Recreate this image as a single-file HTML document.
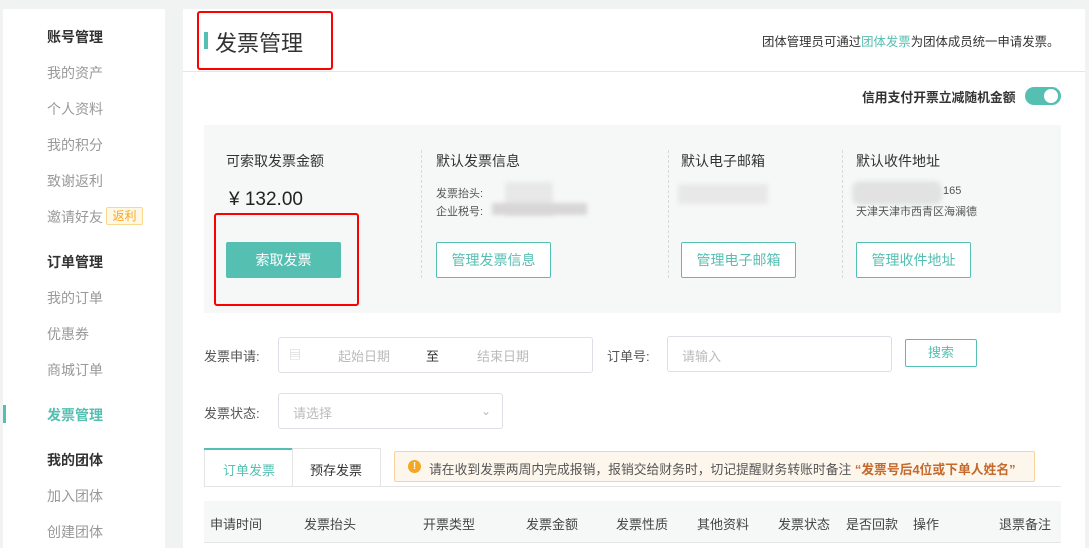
<!DOCTYPE html>
<html><head><meta charset="utf-8"><style>
*{margin:0;padding:0;box-sizing:border-box}
body{width:1089px;height:548px;background:#f1f3f3;font-family:"Liberation Sans","Noto Sans CJK SC",sans-serif;position:relative;overflow:hidden;color:#333}
.a{position:absolute;white-space:nowrap}
.side{position:absolute;left:3px;top:9px;width:162px;height:539px;background:#fff}
.main{position:absolute;left:183px;top:9px;width:902px;height:539px;background:#fff}
.s{font-size:14px;color:#999;left:47px}
.h{font-size:14px;color:#333;font-weight:bold;left:47px}
.btn{position:absolute;border:1px solid #55bfb2;color:#55bfb2;font-size:14px;text-align:center;border-radius:2px;background:#fff}
.inp{position:absolute;border:1px solid #dcdfe6;border-radius:3px;background:#fff;font-size:13px;color:#bbb}
.blur{position:absolute;background:#e2e2e2;filter:blur(2px)}
</style></head><body>
<div class="side"></div>
<div class="a h" style="top:27px">账号管理</div>
<div class="a s" style="top:63px">我的资产</div>
<div class="a s" style="top:99px">个人资料</div>
<div class="a s" style="top:135px">我的积分</div>
<div class="a s" style="top:171px">致谢返利</div>
<div class="a s" style="top:207px">邀请好友</div>
<div class="a" style="left:106px;top:207px;width:37px;height:18px;border:1px solid #fbd98a;background:#fff8e6;color:#f5a623;font-size:12px;text-align:center;line-height:16px;border-radius:2px">返利</div>
<div class="a h" style="top:252px">订单管理</div>
<div class="a s" style="top:288px">我的订单</div>
<div class="a s" style="top:324px">优惠券</div>
<div class="a s" style="top:360px">商城订单</div>
<div class="a" style="left:3px;top:405px;width:3px;height:18px;background:#55bfb2"></div>
<div class="a h" style="top:405px;color:#55bfb2">发票管理</div>
<div class="a h" style="top:450px">我的团体</div>
<div class="a s" style="top:486px">加入团体</div>
<div class="a s" style="top:522px">创建团体</div>

<div class="main"></div>
<div class="a" style="left:183px;top:71px;width:902px;height:1px;background:#e6e6e6"></div>
<div class="a" style="left:204px;top:32px;width:4px;height:17px;background:#55bfb2"></div>
<div class="a" style="left:215px;top:26px;font-size:22px;color:#333">发票管理</div>
<div class="a" style="left:197px;top:11px;width:136px;height:59px;border:2px solid #f00;border-radius:3px"></div>
<div class="a" style="left:762px;top:32px;font-size:12.4px;color:#333">团体管理员可通过<span style="color:#55bfb2">团体发票</span>为团体成员统一申请发票。</div>
<div class="a" style="left:862px;top:87px;font-size:12.8px;font-weight:bold;color:#333">信用支付开票立减随机金额</div>
<div class="a" style="left:1025px;top:87px;width:36px;height:18px;border-radius:9px;background:#55bfb2"><div style="position:absolute;right:3px;top:2px;width:14px;height:14px;border-radius:50%;background:#fff"></div></div>

<div class="a" style="left:204px;top:125px;width:857px;height:188px;background:#f6f8f8"></div>
<div class="a" style="left:226px;top:151px;font-size:14px">可索取发票金额</div>
<div class="a" style="left:229px;top:189px;font-size:19px;color:#222">¥ 132.00</div>
<div class="a" style="left:226px;top:242px;width:115px;height:36px;background:#55bfb2;color:#fff;font-size:14px;text-align:center;line-height:36px;border-radius:2px">索取发票</div>
<div class="a" style="left:214px;top:213px;width:145px;height:93px;border:2px solid #f00;border-radius:3px"></div>
<div class="a" style="left:421px;top:150px;height:128px;border-left:1px dashed #d8d8d8"></div>
<div class="a" style="left:668px;top:150px;height:128px;border-left:1px dashed #d8d8d8"></div>
<div class="a" style="left:842px;top:150px;height:128px;border-left:1px dashed #d8d8d8"></div>
<div class="a" style="left:436px;top:151px;font-size:14px">默认发票信息</div>
<div class="blur" style="left:505px;top:182px;width:48px;height:34px;background:#e8e8e8"></div>
<div class="blur" style="left:492px;top:203px;width:95px;height:12px;background:#d8d6d6"></div>
<div class="a" style="left:436px;top:185px;font-size:11px;color:#555">发票抬头:</div>
<div class="a" style="left:436px;top:203px;font-size:11px;color:#555">企业税号:</div>
<div class="a" style="left:681px;top:151px;font-size:14px">默认电子邮箱</div>
<div class="blur" style="left:678px;top:184px;width:90px;height:20px;background:#e8e8e8"></div>
<div class="a" style="left:856px;top:151px;font-size:14px">默认收件地址</div>
<div class="blur" style="left:852px;top:181px;width:90px;height:24px;background:#e2e2e2;border-radius:8px"></div>
<div class="a" style="left:943px;top:185px;font-size:11px;color:#555">165</div>
<div class="a" style="left:856px;top:203px;font-size:11px;color:#555">天津天津市西青区海澜德</div>
<div class="btn" style="left:436px;top:242px;width:115px;height:36px;line-height:34px">管理发票信息</div>
<div class="btn" style="left:681px;top:242px;width:115px;height:36px;line-height:34px">管理电子邮箱</div>
<div class="btn" style="left:856px;top:242px;width:115px;height:36px;line-height:34px">管理收件地址</div>

<div class="a" style="left:204px;top:346px;font-size:13px;color:#555">发票申请:</div>
<div class="inp" style="left:278px;top:337px;width:315px;height:36px"></div>
<div class="a" style="left:289px;top:346px;font-size:12px;color:#ccc">▤</div>
<div class="a" style="left:338px;top:346px;font-size:13px;color:#bbb">起始日期</div>
<div class="a" style="left:426px;top:346px;font-size:13px;color:#333">至</div>
<div class="a" style="left:477px;top:346px;font-size:13px;color:#bbb">结束日期</div>
<div class="a" style="left:607px;top:346px;font-size:13px;color:#555">订单号:</div>
<div class="inp" style="left:667px;top:336px;width:225px;height:36px"></div>
<div class="a" style="left:682px;top:346px;font-size:13px;color:#bbb">请输入</div>
<div class="btn" style="left:905px;top:339px;width:72px;height:28px;line-height:26px;font-size:13px">搜索</div>
<div class="a" style="left:204px;top:403px;font-size:13px;color:#555">发票状态:</div>
<div class="inp" style="left:278px;top:393px;width:225px;height:36px"></div>
<div class="a" style="left:293px;top:403px;font-size:13px;color:#bbb">请选择</div>
<div class="a" style="left:481px;top:404px;font-size:12px;color:#bbb">⌄</div>

<div class="a" style="left:204px;top:448px;width:177px;height:38px;border:1px solid #e4e4e4;border-bottom:none"></div>
<div class="a" style="left:204px;top:448px;width:88px;height:2px;background:#55bfb2"></div>
<div class="a" style="left:292px;top:449px;width:1px;height:37px;background:#e4e4e4"></div>
<div class="a" style="left:223px;top:460px;font-size:13px;color:#55bfb2">订单发票</div>
<div class="a" style="left:310px;top:460px;font-size:13px;color:#333">预存发票</div>
<div class="a" style="left:204px;top:486px;width:857px;height:1px;background:#e4e4e4"></div>
<div class="a" style="left:394px;top:451px;width:641px;height:31px;border:1px solid #f6d3a0;background:#fdf6ec;border-radius:2px"></div>
<div class="a" style="left:408px;top:460px;width:13px;height:13px;border-radius:50%;background:#f5a623;color:#fff;font-size:10px;text-align:center;line-height:13px;font-weight:bold">!</div>
<div class="a" style="left:429px;top:459px;font-size:12.8px;color:#555">请在收到发票两周内完成报销，报销交给财务时，切记提醒财务转账时备注 <b style="color:#c46a2c">“发票号后4位或下单人姓名”</b></div>

<div class="a" style="left:204px;top:501px;width:857px;height:42px;background:#f6f8f8;border-bottom:1px solid #e6e6e6"></div>
<div class="a" style="top:514px;left:210px;font-size:13px;color:#444">申请时间</div>
<div class="a" style="top:514px;left:304px;font-size:13px;color:#444">发票抬头</div>
<div class="a" style="top:514px;left:423px;font-size:13px;color:#444">开票类型</div>
<div class="a" style="top:514px;left:526px;font-size:13px;color:#444">发票金额</div>
<div class="a" style="top:514px;left:616px;font-size:13px;color:#444">发票性质</div>
<div class="a" style="top:514px;left:697px;font-size:13px;color:#444">其他资料</div>
<div class="a" style="top:514px;left:778px;font-size:13px;color:#444">发票状态</div>
<div class="a" style="top:514px;left:846px;font-size:13px;color:#444">是否回款</div>
<div class="a" style="top:514px;left:913px;font-size:13px;color:#444">操作</div>
<div class="a" style="top:514px;left:999px;font-size:13px;color:#444">退票备注</div>
</body></html>
